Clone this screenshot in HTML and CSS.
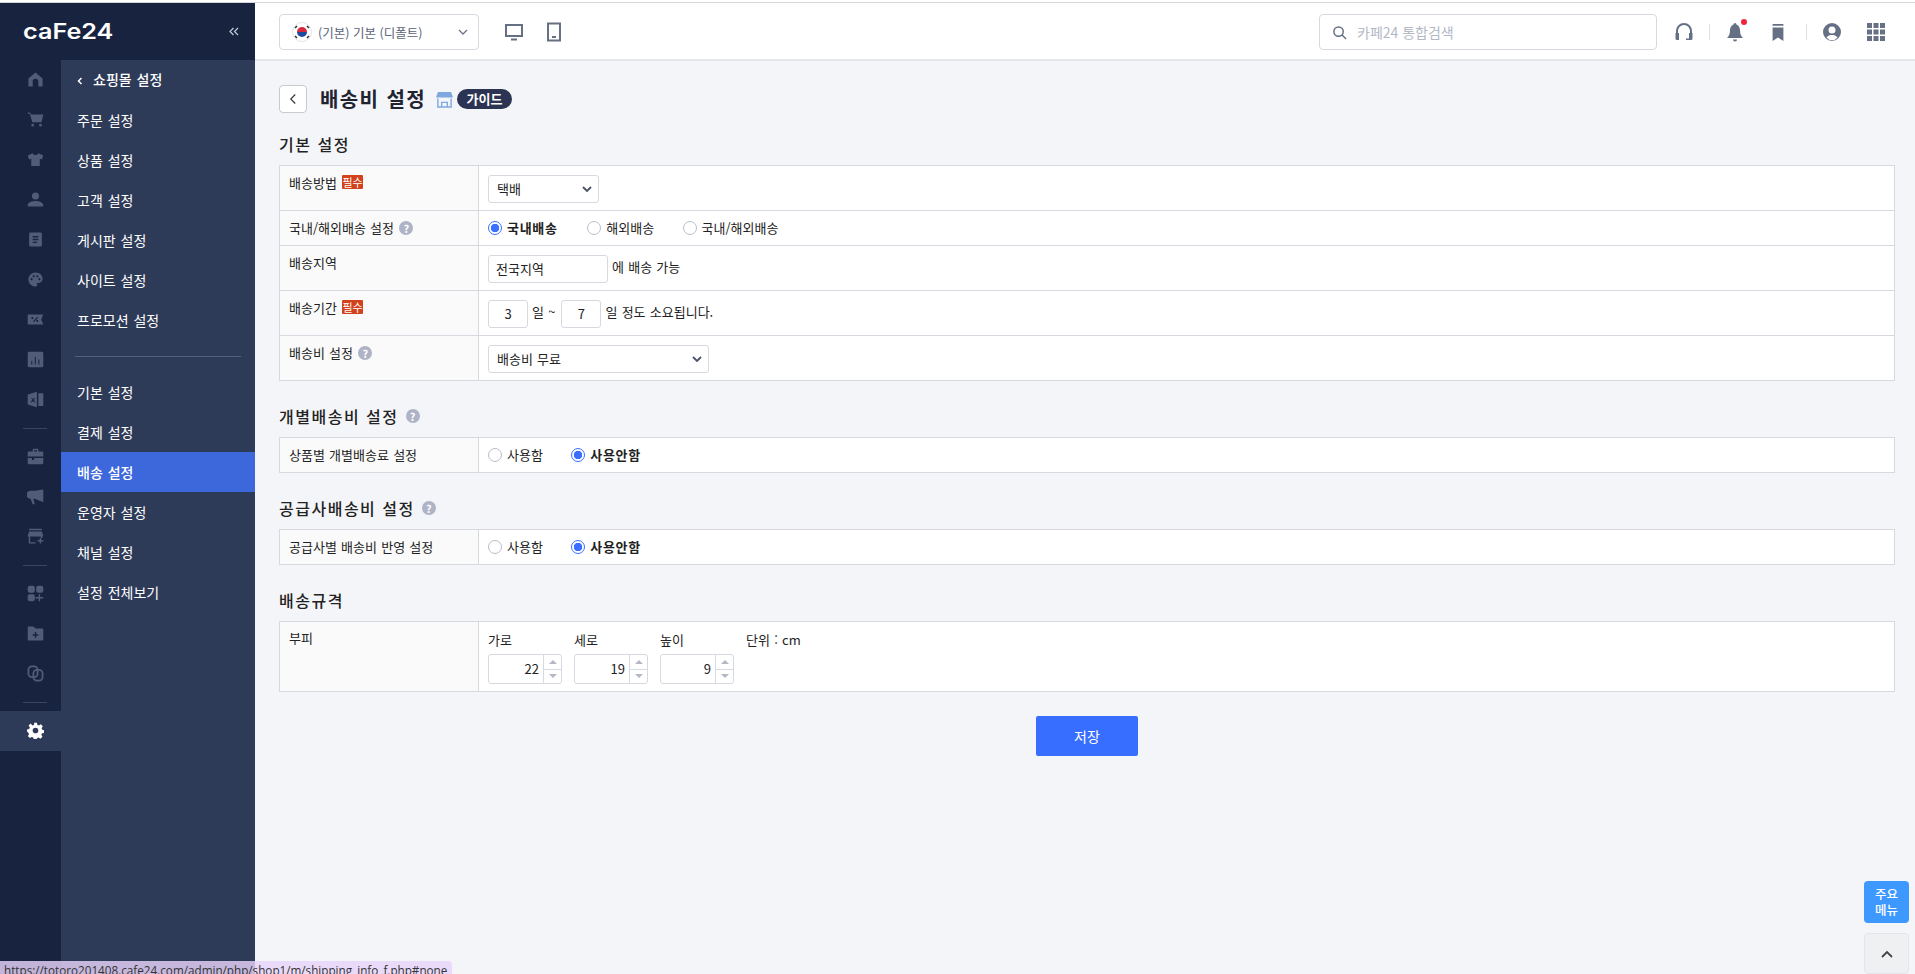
FILE: index.html
```html
<!DOCTYPE html>
<html lang="ko">
<head>
    <meta charset="UTF-8">
    <title>배송비 설정</title>
    <link rel="stylesheet" href="styles.css">
</head>
<body>

<div class="layout">
    <aside class="sidebar">
        <div class="brand">
            <span class="logo">caFe24</span>
            <svg class="collapse" viewBox="0 0 10 9"><path d="M4.500 1 1 4.500 4.500 8M9 1 5.500 4.500 9 8"/></svg>
        </div>
        <div class="side-body">
            <nav class="icon-nav">
                <a class="icon-item"><svg viewBox="0 0 24 24"><path d="M12 2 2 10.500V22h6v-7a4 4 0 0 1 8 0v7h6V10.500z"/></svg></a>
                <a class="icon-item"><svg viewBox="0 0 24 24"><path d="M1 2h3.500l1 3H23l-2.500 11H7.500L4 4H1zM8 18a2 2 0 1 1 0 4 2 2 0 0 1 0-4zm11 0a2 2 0 1 1 0 4 2 2 0 0 1 0-4z"/></svg></a>
                <a class="icon-item"><svg viewBox="0 0 24 24"><path d="M8 3 1 6.500 3 12l3-1v10h12V11l3 1 2-5.500L16 3c-.5 1.500-2 2.500-4 2.500S8.500 4.500 8 3z"/></svg></a>
                <a class="icon-item"><svg viewBox="0 0 24 24"><path d="M12 12a5 5 0 1 0 0-10 5 5 0 0 0 0 10zM12 14c-5 0-11 2-11 6 0 1 .5 2 2 2h18c1.500 0 2-1 2-2 0-4-6-6-11-6z"/></svg></a>
                <a class="icon-item"><svg viewBox="0 0 24 24"><path fill-rule="evenodd" d="M5 2h14a2 2 0 0 1 2 2v16a2 2 0 0 1-2 2H5a2 2 0 0 1-2-2V4a2 2 0 0 1 2-2zm3 5v2h8V7zm0 4v2h8v-2zm0 4v2h6v-2z"/></svg></a>
                <a class="icon-item"><svg viewBox="0 0 24 24"><path d="M12 2C6.490 2 2 6.490 2 12s4.490 10 10 10c1.380 0 2.500-1.120 2.500-2.500 0-.61-.23-1.200-.64-1.670-.08-.1-.13-.21-.13-.33 0-.28.22-.5.5-.5H16c3.310 0 6-2.690 6-6 0-4.960-4.490-9-10-9zm5.500 11c-.83 0-1.500-.67-1.500-1.500s.67-1.500 1.500-1.500 1.500.67 1.500 1.500-.67 1.500-1.500 1.500zm-3-4c-.83 0-1.500-.67-1.500-1.500S13.670 6 14.500 6s1.500.67 1.500 1.500S15.330 9 14.500 9zM5 11.500c0-.83.67-1.500 1.500-1.500s1.500.67 1.500 1.500S7.330 13 6.500 13 5 12.330 5 11.500zm6-4c0 .83-.67 1.500-1.500 1.500S8 8.330 8 7.500 8.670 6 9.500 6s1.500.67 1.500 1.500z"/></svg></a>
                <a class="icon-item"><svg viewBox="0 0 24 24"><path fill-rule="evenodd" d="M1 5h22l-3 7 3 7H1zm6.500 3.500a1.500 1.500 0 1 0 0 3 1.500 1.500 0 0 0 0-3zm6.500 0L8 15.500h2l6-7zm.5 4a1.500 1.500 0 1 0 0 3 1.500 1.500 0 0 0 0-3z"/></svg></a>
                <a class="icon-item"><svg viewBox="0 0 24 24"><path fill-rule="evenodd" d="M3 1h18a2 2 0 0 1 2 2v18a2 2 0 0 1-2 2H3a2 2 0 0 1-2-2V3a2 2 0 0 1 2-2zm3 13v5h1.500v-5zm5-6v11h1.500V8zm5 4v7h1.500v-7z"/></svg></a>
                <a class="icon-item"><svg viewBox="0 0 24 24"><path fill-rule="evenodd" d="M1 5l13-4v22L1 19zm5 5 1.500 2.500L5 16h2l1.500-2 1.500 2h2l-2.500-3.500L12 10h-2l-1.500 1.500L7.500 10zM16 3h7v18h-7z"/></svg></a>
                <div class="icon-line"></div>
                <a class="icon-item"><svg viewBox="0 0 24 24"><path d="M8 2a1 1 0 0 1 1-1h6a1 1 0 0 1 1 1v3h5a2 2 0 0 1 2 2v5H1V7a2 2 0 0 1 2-2h5zm2 1v2h4V3zM1 14h6v3h3v-3h13v7a2 2 0 0 1-2 2H3a2 2 0 0 1-2-2z"/></svg></a>
                <a class="icon-item"><svg viewBox="0 0 24 24"><path d="M23 2v18L11 15H9l2 8H8l-3-8a5.500 5.500 0 0 1 0-11h6z"/></svg></a>
                <a class="icon-item"><svg viewBox="0 0 24 24"><path d="M3 1h18v2H3zM3 5h18l2 6v1h-1.500v2h-2v-2H4.500v8H12v2H2.500V12H1v-1zM18 14h2v3h3v2h-3v3h-2v-3h-3v-2h3z"/></svg></a>
                <div class="icon-line"></div>
                <a class="icon-item"><svg viewBox="0 0 24 24"><rect x="1" y="1" width="10" height="10" rx="3"/><rect x="13" y="1" width="10" height="10" rx="3"/><rect x="1" y="13" width="10" height="10" rx="3"/><path d="M16.500 13h2v4h4.500v2h-4.500v4h-2v-4H12v-2h4.500z"/></svg></a>
                <a class="icon-item"><svg viewBox="0 0 24 24"><path fill-rule="evenodd" d="M1 3a1 1 0 0 1 1-1h7l3 3h10a1 1 0 0 1 1 1v15a1 1 0 0 1-1 1H2a1 1 0 0 1-1-1zm10 7v3H8v2h3v3h2v-3h3v-2h-3v-3z"/></svg></a>
                <a class="icon-item"><svg viewBox="0 0 24 24" class="outline"><rect x="2" y="2" width="13" height="15" rx="5"/><rect x="9" y="7" width="13" height="15" rx="5"/></svg></a>
                <div class="icon-line"></div>
                <a class="icon-item on"><svg viewBox="0 0 24 24"><path fill-rule="evenodd" d="M10 1h4l.6 3 2.300 1 2.600-1.700 2.800 2.800L20.600 8.700l1 2.300 2.400.6v4l-2.800.2-1 2.300 1.600 2.600-2.800 2.800-2.600-1.600-2.300.9-.6 2.100h-4l-.6-2.900-2.300-1-2.600 1.700-2.800-2.800 1.700-2.600-1-2.300L0 13.500v-3l3-.6 1-2.300-1.700-2.600 2.800-2.800L7.700 4.900 10 4zM12 8a4 4 0 1 0 0 8 4 4 0 0 0 0-8z"/></svg></a>
            </nav>
            <nav class="menu">
                <a class="menu-item menu-head"><svg class="back-mark" viewBox="0 0 6 8"><path d="M4.500 1 1.500 4l3 3"/></svg>쇼핑몰 설정</a>
                <a class="menu-item">주문 설정</a>
                <a class="menu-item">상품 설정</a>
                <a class="menu-item">고객 설정</a>
                <a class="menu-item">게시판 설정</a>
                <a class="menu-item">사이트 설정</a>
                <a class="menu-item">프로모션 설정</a>
                <div class="menu-line"></div>
                <a class="menu-item">기본 설정</a>
                <a class="menu-item">결제 설정</a>
                <a class="menu-item active">배송 설정</a>
                <a class="menu-item">운영자 설정</a>
                <a class="menu-item">채널 설정</a>
                <a class="menu-item">설정 전체보기</a>
            </nav>
        </div>
    </aside>

    <div class="main">
        <header class="topbar">
            <div class="store-select">
                <svg class="flag" viewBox="0 0 20 20">
                    <circle cx="10" cy="10" r="9.500" fill="#fff" stroke="#e2e4ea"/>
                    <path d="M5 10a5 5 0 0 1 10 0z" fill="#d8283c"/>
                    <path d="M5 10a5 5 0 0 0 10 0z" fill="#1d4a9c"/>
                    <path d="M3 6l2-2M15 4l2 2M3 14l2 2M15 16l2-2" stroke="#333" stroke-width="1.500"/>
                </svg>
                <span class="store-name">(기본) 기본 (디폴트)</span>
                <svg class="chev" viewBox="0 0 10 6"><path d="M1 1l4 4 4-4"/></svg>
            </div>
            <svg class="device" viewBox="0 0 20 20"><path d="M2 3h16v11H2zM7 17.500h6" /></svg>
            <svg class="device" viewBox="0 0 20 20"><path d="M4 1.500h12v17H4zM8 15h4"/></svg>
            <div class="search">
                <svg viewBox="0 0 16 16"><circle cx="7" cy="7" r="5"/><path d="M10.500 10.500 15 15"/></svg>
                <span>카페24 통합검색</span>
            </div>
            <div class="tools">
                <svg class="tool" viewBox="0 0 20 20"><path class="stroke" d="M3 11V9a7 7 0 0 1 14 0v2"/><path d="M1.500 11H5v7H3a1.500 1.500 0 0 1-1.500-1.500zM15 11h3.500v5.500A1.500 1.500 0 0 1 17 18h-5v-1.500h3z"/></svg>
                <i class="tool-line"></i>
                <span class="bell">
                    <svg class="tool" viewBox="0 0 20 20"><path d="M10 1a1.500 1.500 0 0 1 1.500 1.500C14 3.500 15 6 15 8c0 4 1 6 3 8H2c2-2 3-4 3-8 0-2 1-4.500 3.500-5.500A1.500 1.500 0 0 1 10 1zM8 17.500h4a2 2 0 0 1-4 0z"/></svg>
                    <b class="dot"></b>
                </span>
                <svg class="tool mark" viewBox="0 0 20 20"><path d="M4 1h12v2H4zM4 5h12v15l-6-4-6 4z"/></svg>
                <i class="tool-line"></i>
                <svg class="tool user" viewBox="0 0 20 20"><path fill-rule="evenodd" d="M10 1a9 9 0 1 1 0 18 9 9 0 0 1 0-18zm0 3.500a3.500 3.500 0 1 0 0 7 3.500 3.500 0 0 0 0-7zM4.500 15.500a7 7 0 0 0 11 0C14 13.500 12 13 10 13s-4 .5-5.500 2.500z"/></svg>
                <svg class="tool grid" viewBox="0 0 18 18"><rect width="5" height="5"/><rect x="6.500" width="5" height="5"/><rect x="13" width="5" height="5"/><rect y="6.500" width="5" height="5"/><rect x="6.500" y="6.500" width="5" height="5"/><rect x="13" y="6.500" width="5" height="5"/><rect y="13" width="5" height="5"/><rect x="6.500" y="13" width="5" height="5"/><rect x="13" y="13" width="5" height="5"/></svg>
            </div>
        </header>

        <main class="content">
            <div class="page-title">
                <button class="back-btn"><svg viewBox="0 0 10 16"><path d="M8 2 2 8l6 6"/></svg></button>
                <h1>배송비 설정</h1>
                <svg class="shop-icon" viewBox="0 0 18 18"><path d="M2 1h14l2 6H0z" fill="#7fa8e0"/><path d="M2 8v9h14V8M6 17v-5h6v5" fill="none" stroke="#7fa8e0" stroke-width="1.500"/></svg>
                <span class="guide">가이드</span>
            </div>

            <h2>기본 설정</h2>
            <table class="form-table">
                <tr class="tall">
                    <th>배송방법 <span class="req">필수</span></th>
                    <td><span class="select select-s">택배<svg class="chev dark" viewBox="0 0 10 6"><path d="M1 1l4 4 4-4"/></svg></span></td>
                </tr>
                <tr>
                    <th>국내/해외배송 설정 <span class="help">?</span></th>
                    <td class="radios">
                        <label class="radio-w1"><i class="radio on"></i><b>국내배송</b></label>
                        <label class="radio-w2"><i class="radio"></i>해외배송</label>
                        <label><i class="radio"></i>국내/해외배송</label>
                    </td>
                </tr>
                <tr class="tall">
                    <th>배송지역</th>
                    <td class="inline"><span class="input input-area">전국지역</span>에 배송 가능</td>
                </tr>
                <tr class="tall">
                    <th>배송기간 <span class="req">필수</span></th>
                    <td class="inline"><span class="input input-day">3</span>일 ~<span class="input input-day second">7</span>일 정도 소요됩니다.</td>
                </tr>
                <tr class="tall">
                    <th>배송비 설정 <span class="help">?</span></th>
                    <td><span class="select select-l">배송비 무료<svg class="chev dark" viewBox="0 0 10 6"><path d="M1 1l4 4 4-4"/></svg></span></td>
                </tr>
            </table>

            <h2>개별배송비 설정<span class="help help-h">?</span></h2>
            <table class="form-table">
                <tr>
                    <th>상품별 개별배송료 설정</th>
                    <td class="radios">
                        <label class="radio-w3"><i class="radio"></i>사용함</label>
                        <label><i class="radio on"></i><b>사용안함</b></label>
                    </td>
                </tr>
            </table>

            <h2>공급사배송비 설정<span class="help help-h">?</span></h2>
            <table class="form-table">
                <tr>
                    <th>공급사별 배송비 반영 설정</th>
                    <td class="radios">
                        <label class="radio-w3"><i class="radio"></i>사용함</label>
                        <label><i class="radio on"></i><b>사용안함</b></label>
                    </td>
                </tr>
            </table>

            <h2>배송규격</h2>
            <table class="form-table">
                <tr class="volume">
                    <th>부피</th>
                    <td>
                        <div class="sizes">
                            <div class="size"><span>가로</span><span class="spin"><em>22</em><i class="arrows"><u class="up"></u><u class="down"></u></i></span></div>
                            <div class="size"><span>세로</span><span class="spin"><em>19</em><i class="arrows"><u class="up"></u><u class="down"></u></i></span></div>
                            <div class="size"><span>높이</span><span class="spin"><em>9</em><i class="arrows"><u class="up"></u><u class="down"></u></i></span></div>
                            <div class="size unit">단위 : cm</div>
                        </div>
                    </td>
                </tr>
            </table>

            <div class="actions"><button class="save-btn">저장</button></div>
        </main>
    </div>
</div>

<a class="float-menu">주요<br>메뉴</a>
<a class="float-top"><svg viewBox="0 0 12 8"><path d="M1 7l5-5 5 5"/></svg></a>
<div class="status-url">https://totoro201408.cafe24.com/admin/php/shop1/m/shipping_info_f.php#none</div>

</body>
</html>
```

FILE: styles.css
```css
* {
    box-sizing: border-box;
}
body {
    margin: 0;
    height: 974px;
    overflow: hidden;
    font-family: "Noto Sans CJK KR", "Noto Sans", sans-serif;
    font-size: 13px;
    color: #222;
    background: #f4f5f9;
}
.layout {
    display: flex;
    height: 974px;
    padding-top: 3px;
    box-shadow: inset 0 2px 0 #fff, inset 0 3px 0 #d6d6d6;
}

/* sidebar */
.sidebar {
    width: 255px;
    flex: none;
    background: #18243f;
    display: flex;
    flex-direction: column;
}
.brand {
    height: 57px;
    flex: none;
    padding: 0 16px 0 23px;
    display: flex;
    align-items: center;
    justify-content: space-between;
}
.logo {
    font-family: Inter, sans-serif;
    font-size: 21px;
    font-weight: 600;
    display: inline-block;
    transform: scaleX(1.2);
    transform-origin: left center;
    color: #fff;
}
.collapse {
    width: 10px;
    height: 9px;
    fill: none;
    stroke: #c4c9d6;
    stroke-width: 1.200;
}
.side-body {
    flex: 1;
    display: flex;
}
.icon-nav {
    width: 61px;
    flex: none;
}
.icon-item {
    height: 40px;
    padding: 0 0 2px 9px;
    display: flex;
    align-items: center;
    justify-content: center;
}
.icon-item svg {
    width: 17px;
    height: 17px;
    fill: #515c78;
}
.icon-item svg.outline {
    fill: none;
    stroke: #515c78;
    stroke-width: 2.500;
}
.icon-item.on {
    background: #2e3b58;
}
.icon-item.on svg {
    fill: #fff;
}
.icon-line {
    height: 1px;
    margin: 8px 14px 8px 23px;
    background: #3a4560;
}
.menu {
    flex: 1;
    background: #2e3b58;
}
.menu-item {
    display: block;
    height: 40px;
    line-height: 40px;
    padding-left: 16px;
    color: #fff;
    font-size: 14px;
    word-spacing: 1px;
}
.menu-head {
    font-weight: 500;
    line-height: 38px;
}
.back-mark {
    width: 6px;
    height: 8px;
    margin-right: 10px;
    fill: none;
    stroke: #fff;
    stroke-width: 1.500;
}
.menu-item.active {
    background: #3d68dc;
    font-weight: 500;
}
.menu-line {
    height: 1px;
    margin: 16px 14px 15px 14px;
    background: #56607a;
}

/* top bar */
.main {
    flex: 1;
    min-width: 0;
}
.topbar {
    height: 58px;
    background: #fff;
    border-bottom: 2px solid #e4e6ec;
    padding: 2px 30px 0 24px;
    display: flex;
    align-items: center;
}
.store-select {
    width: 200px;
    height: 36px;
    border: 1px solid #d7d9e0;
    border-radius: 4px;
    padding: 0 10px 0 12px;
    display: flex;
    align-items: center;
    margin-right: 25px;
}
.flag {
    width: 20px;
    height: 20px;
    flex: none;
}
.store-name {
    margin-left: 6px;
    flex: 1;
    font-size: 12.500px;
    color: #5a6378;
}
.chev {
    width: 10px;
    height: 6px;
    fill: none;
    stroke: #6a7388;
    stroke-width: 1.300;
}
.chev.dark {
    stroke: #4a5266;
    stroke-width: 1.800;
}
.device {
    width: 20px;
    height: 20px;
    margin-right: 20px;
    fill: none;
    stroke: #667085;
    stroke-width: 2;
}
.search {
    margin-left: auto;
    width: 338px;
    height: 36px;
    border: 1px solid #d7d9e0;
    border-radius: 4px;
    padding-left: 12px;
    display: flex;
    align-items: center;
    color: #b3b8c6;
    font-size: 14px;
}
.search svg {
    width: 15px;
    height: 15px;
    margin-right: 10px;
    fill: none;
    stroke: #667085;
    stroke-width: 1.600;
}
.tools {
    display: flex;
    align-items: center;
    margin-left: 17px;
}
.tool {
    display: block;
    width: 20px;
    height: 20px;
    fill: #667085;
}
.tool .stroke {
    fill: none;
    stroke: #667085;
    stroke-width: 2;
}
.tool-line {
    width: 1px;
    height: 16px;
    margin: 0 15px;
    background: #dcdfe6;
}
.bell {
    position: relative;
}
.dot {
    position: absolute;
    top: -3px;
    right: -2px;
    width: 6px;
    height: 6px;
    border-radius: 50%;
    background: #f0243c;
}
.tool.mark {
    width: 18px;
    height: 18px;
    margin-left: 24px;
    margin-right: 4px;
}
.tool.grid {
    width: 18px;
    height: 18px;
    margin-left: 25px;
}

/* content */
.content {
    padding: 24px 20px 0 24px;
}
.page-title {
    display: flex;
    align-items: center;
    height: 28px;
}
.back-btn {
    width: 28px;
    height: 28px;
    padding: 0;
    background: #fff;
    border: 1px solid #c8cad0;
    border-radius: 4px;
    margin-right: 13px;
    display: flex;
    align-items: center;
    justify-content: center;
}
.back-btn svg {
    width: 8px;
    height: 12px;
    fill: none;
    stroke: #333;
    stroke-width: 1.500;
}
h1 {
    margin: 0 0 2px;
    font-size: 20px;
    font-weight: 700;
    letter-spacing: 1.400px;
    color: #1f2430;
}
.shop-icon {
    width: 17px;
    height: 17px;
    margin-left: 10px;
}
.guide {
    margin-left: 4px;
    width: 55px;
    height: 20px;
    border-radius: 10px;
    background: #2b3452;
    color: #fff;
    font-size: 13px;
    font-weight: 700;
    line-height: 20px;
    text-align: center;
}
h2 {
    display: flex;
    align-items: center;
    height: 18px;
    margin: 27px 0 11px;
    padding-bottom: 2px;
    font-size: 16px;
    font-weight: 500;
    line-height: 16px;
    letter-spacing: 1.500px;
    color: #222;
}
.page-title + h2 {
    margin-top: 23px;
}
.help {
    display: inline-block;
    width: 14px;
    height: 14px;
    border-radius: 50%;
    background: #aeb3c6;
    color: #fff;
    font-size: 11px;
    font-weight: 700;
    line-height: 14px;
    text-align: center;
    vertical-align: 0;
    margin-left: 1px;
    letter-spacing: 0;
}
.help-h {
    margin-left: 7px;
}
.form-table {
    width: 100%;
    border-collapse: collapse;
    background: #fff;
    table-layout: fixed;
}
.form-table th,
.form-table td {
    border: 1px solid #d7d9e0;
    vertical-align: top;
    height: 35px;
    line-height: 18px;
    font-size: 13px;
    font-weight: 400;
    word-spacing: 0.600px;
    padding: 8px 9px 5px;
    color: #222;
}
.form-table th {
    width: 199px;
    background: #fafafa;
    text-align: left;
    white-space: nowrap;
}
.form-table tr.tall td,
.form-table tr.tall th {
    height: 45px;
    padding: 9px 9px 6px;
}
.form-table tr.tall th {
    padding-top: 8px;
}
.form-table tr.volume th,
.form-table tr.volume td {
    height: 70px;
    padding: 8px 9px 6px;
}
.form-table tr.volume th {
    padding-top: 7px;
}
.req {
    display: inline-block;
    width: 21px;
    height: 14px;
    line-height: 14px;
    font-size: 11px;
    text-align: center;
    background: #d2421c;
    color: #fff;
    border-radius: 1px;
    vertical-align: 1px;
    margin-left: 1px;
}

/* inputs */
.select,
.input,
.spin {
    background: #fff;
    border: 1px solid #d7d9e0;
    border-radius: 3px;
}
.select {
    display: inline-flex;
    align-items: center;
    justify-content: space-between;
    height: 28px;
    padding: 0 6px 0 8px;
}
.select-s {
    width: 111px;
}
.select-l {
    width: 221px;
}
.form-table td.inline {
    white-space: nowrap;
    line-height: 24px;
}
.input {
    display: inline-block;
    height: 28px;
    line-height: 26px;
    vertical-align: top;
}
.input-area {
    width: 120px;
    padding-left: 7px;
    margin-right: 4px;
}
.input-day {
    width: 40px;
    text-align: center;
    margin-right: 4px;
}
.input-day.second {
    margin-left: 6px;
}
.radios label {
    display: inline-flex;
    align-items: center;
    height: 18px;
    vertical-align: top;
}
.radio {
    width: 14px;
    height: 14px;
    border: 1px solid #b9bdcc;
    border-radius: 50%;
    background: #fff;
    margin-right: 5px;
    flex: none;
}
.radio.on {
    border-color: #3a6fff;
    background: radial-gradient(circle, #3a6fff 0 4px, #fff 4.500px);
}
.radios b {
    font-weight: 700;
    letter-spacing: 0.700px;
}
.radio-w1 {
    width: 95px;
}
.radio-w2 {
    width: 91px;
}
.radio-w3 {
    width: 79px;
}
.sizes {
    display: flex;
    margin-top: 1px;
}
.size {
    width: 74px;
    margin-right: 12px;
    display: flex;
    flex-direction: column;
    gap: 5px;
}
.size.unit {
    width: auto;
    display: block;
}
.spin {
    height: 30px;
    display: flex;
}
.spin em {
    flex: 1;
    font-style: normal;
    text-align: right;
    padding-right: 4px;
    line-height: 28px;
}
.arrows {
    width: 18px;
    border-left: 1px solid #d7d9e0;
    display: flex;
    flex-direction: column;
}
.arrows u {
    flex: 1;
    display: flex;
    align-items: center;
    justify-content: center;
}
.arrows u + u {
    border-top: 1px solid #d7d9e0;
}
.arrows u::after {
    content: "";
    border-left: 4px solid transparent;
    border-right: 4px solid transparent;
}
.arrows .up::after {
    border-bottom: 4px solid #b4b8c6;
}
.arrows .down::after {
    border-top: 4px solid #b4b8c6;
}
.actions {
    margin-top: 24px;
    text-align: center;
}
.save-btn {
    width: 102px;
    height: 40px;
    border: none;
    border-radius: 2px;
    background: #386eff;
    color: #fff;
    font-family: inherit;
    font-size: 14px;
}

/* floating */
.float-menu {
    position: absolute;
    left: 1864px;
    top: 881px;
    width: 45px;
    height: 42px;
    border-radius: 4px;
    background: #3d99ff;
    color: #fff;
    font-size: 12.500px;
    font-weight: 500;
    line-height: 15.500px;
    text-align: center;
    padding-top: 5px;
}
.float-top {
    position: absolute;
    left: 1864px;
    top: 933px;
    width: 45px;
    height: 41px;
    border: 1px solid #e4e5e9;
    border-radius: 4px;
    background: #eff0f2;
    display: flex;
    align-items: center;
    justify-content: center;
}
.float-top svg {
    width: 12px;
    height: 8px;
    fill: none;
    stroke: #444;
    stroke-width: 1.800;
}
.status-url {
    position: absolute;
    left: 0;
    top: 961px;
    width: 452px;
    height: 13px;
    padding-left: 4px;
    overflow: hidden;
    border-top-right-radius: 4px;
    background: rgba(232, 212, 250, 0.82);
    color: #333;
    font-family: "Open Sans", sans-serif;
    font-size: 11.700px;
    line-height: 18px;
    white-space: nowrap;
}
```
